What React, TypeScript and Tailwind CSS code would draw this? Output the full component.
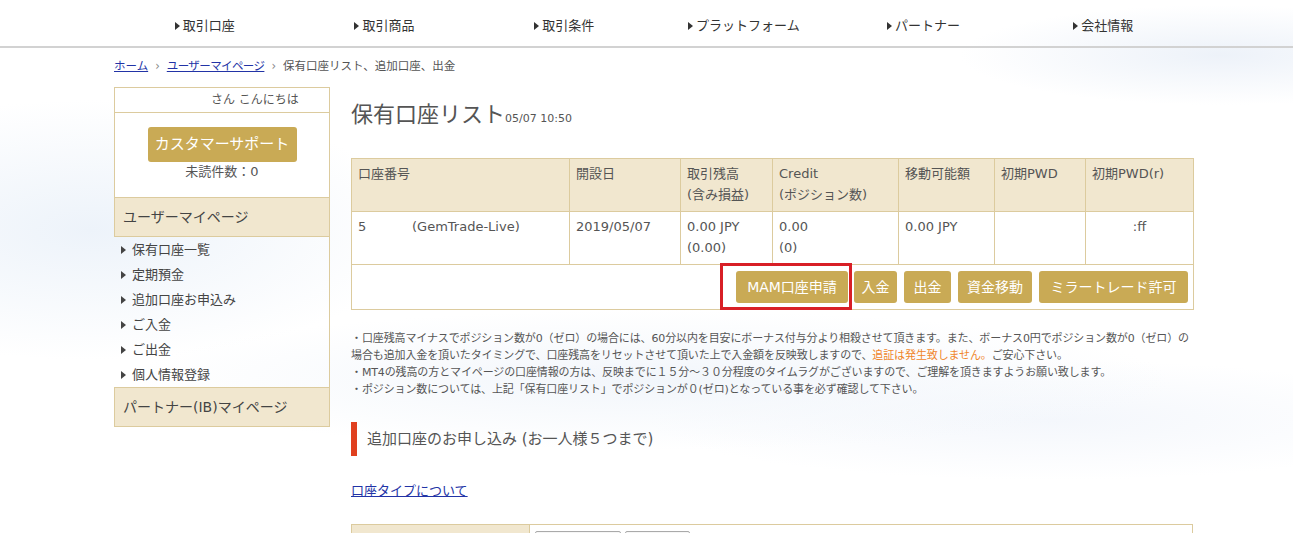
import React from "react";

const Tri = ({ c = "#333" }: { c?: string }) => (
  <svg width="5" height="8" viewBox="0 0 5 8" className="shrink-0">
    <path d="M0 0 L5 4 L0 8 Z" fill={c} />
  </svg>
);

const navItems = ["取引口座", "取引商品", "取引条件", "プラットフォーム", "パートナー", "会社情報"];
const sideItems = ["保有口座一覧", "定期預金", "追加口座お申込み", "ご入金", "ご出金", "個人情報登録"];

export default function App() {
  return (
    <div className="relative h-[533px] w-[1293px] overflow-hidden bg-white font-['DejaVu_Sans','Noto_Sans_CJK_JP',sans-serif] text-[#555]">
      <div className="pointer-events-none absolute inset-0 bg-[radial-gradient(ellipse_330px_130px_at_90px_230px,#edf3fa,transparent),radial-gradient(ellipse_520px_70px_at_650px_380px,#f2f6fb,transparent),radial-gradient(ellipse_260px_50px_at_1220px_55px,#edf2f9,transparent),radial-gradient(ellipse_400px_60px_at_1050px_420px,#f4f7fc,transparent)]" />
      <div className="relative">
        {/* header */}
        <header className="h-[48px] border-b-2 border-[#d2d2d2]">
          <nav className="ml-[115px] grid h-full w-[1078px] grid-cols-6 items-center pt-[6px]">
            {navItems.map((n) => (
              <div key={n} className="flex items-center justify-center gap-[3px] text-[13px] leading-[18px] text-[#333]">
                <Tri />
                <span>{n}</span>
              </div>
            ))}
          </nav>
        </header>

        {/* breadcrumb */}
        <div className="ml-[114px] mt-[10px] flex items-center text-[11.5px] leading-[16px] text-[#555]">
          <a className="text-[#2233a6] underline">ホーム</a>
          <span className="mx-[7px] text-[#888]">›</span>
          <a className="tracking-[-0.6px] text-[#2233a6] underline">ユーザーマイページ</a>
          <span className="mx-[7px] text-[#888]">›</span>
          <span>保有口座リスト、追加口座、出金</span>
        </div>

        <div className="ml-[114px] mt-[13px] flex gap-[21px]">
          {/* sidebar */}
          <aside className="flex w-[216px] flex-col">
            <div className="border-x border-t border-[#dccb9e] bg-white">
              <div className="h-[25px] border-b border-[#dccb9e] pl-[96px] text-[12px] leading-[24px] text-[#555]">
                さん こんにちは
              </div>
              <div className="flex h-[84px] flex-col items-center pt-[14px]">
                <button className="h-[35px] w-[149px] rounded-[3px] bg-[#c9aa55] text-[15px] text-white">
                  カスタマーサポート
                </button>
                <div className="mt-[1px] text-[13px] leading-[18px] text-[#555]">未読件数：0</div>
              </div>
            </div>
            <div className="flex h-[40px] items-center border border-[#dccb9e] bg-[#f1e7cf] pl-[8px] text-[14px] text-[#444]">
              ユーザーマイページ
            </div>
            <ul className="border-r border-[#dccb9e]">
              {sideItems.map((s) => (
                <li key={s} className="flex h-[25px] items-center gap-[6px] pl-[7px] text-[13px] text-[#444]">
                  <Tri c="#444" />
                  <span>{s}</span>
                </li>
              ))}
            </ul>
            <div className="flex h-[40px] items-center border border-[#dccb9e] bg-[#f1e7cf] pl-[8px] text-[14px] text-[#444]">
              パートナー(IB)マイページ
            </div>
          </aside>

          {/* main */}
          <main className="w-[842px] pt-[13px]">
            <div className="flex items-baseline">
              <h1 className="text-[22px] font-normal leading-[30px] text-[#555]">保有口座リスト</h1>
              <span className="text-[11px] text-[#555]">05/07 10:50</span>
            </div>

            <table className="mt-[28px] w-[842px] table-fixed border-collapse text-[13px] leading-[21px] text-[#555]">
              <colgroup>
                <col className="w-[218px]" />
                <col className="w-[111px]" />
                <col className="w-[92px]" />
                <col className="w-[126px]" />
                <col className="w-[96px]" />
                <col className="w-[91px]" />
                <col className="w-[108px]" />
              </colgroup>
              <thead>
                <tr>
                  {["口座番号", "開設日", "取引残高\n(含み損益)", "Credit\n(ポジション数)", "移動可能額", "初期PWD", "初期PWD(r)"].map((h) => (
                    <th
                      key={h}
                      className="h-[53px] whitespace-pre-line border border-[#dccb9e] bg-[#f1e7cf] px-[6px] pb-[6px] pt-[4px] text-left align-top font-normal"
                    >
                      {h}
                    </th>
                  ))}
                </tr>
              </thead>
              <tbody>
                <tr className="bg-white">
                  <td className="h-[53px] border border-[#dccb9e] px-[6px] pb-[6px] pt-[4px] align-top">
                    <span className="inline-block w-[54px]">5</span>(GemTrade-Live)
                  </td>
                  <td className="border border-[#dccb9e] px-[6px] pb-[6px] pt-[4px] align-top">2019/05/07</td>
                  <td className="border border-[#dccb9e] px-[6px] pb-[6px] pt-[4px] align-top">
                    0.00 JPY
                    <br />
                    (0.00)
                  </td>
                  <td className="border border-[#dccb9e] px-[6px] pb-[6px] pt-[4px] align-top">
                    0.00
                    <br />
                    (0)
                  </td>
                  <td className="border border-[#dccb9e] px-[6px] pb-[6px] pt-[4px] align-top">0.00 JPY</td>
                  <td className="border border-[#dccb9e] px-[6px] pb-[6px] pt-[4px] align-top"></td>
                  <td className="border border-[#dccb9e] px-[6px] pb-[6px] pt-[4px] text-center align-top">:ff</td>
                </tr>
                <tr className="bg-white">
                  <td colSpan={7} className="h-[45px] border border-[#dccb9e] px-[5px] py-[5px]">
                    <div className="flex justify-end gap-[7px] text-[14px] text-white">
                      <div className="relative">
                        <span className="pointer-events-none absolute bottom-[-7px] left-[-16px] right-[-4px] top-[-8px] border-[3px] border-[#d81f26]" />
                        <button className="h-[32px] w-[112px] rounded-[3px] bg-[#c9aa55]">MAM口座申請</button>
                      </div>
                      <button className="-ml-[1px] h-[32px] w-[43px] rounded-[3px] bg-[#c9aa55]">入金</button>
                      <button className="h-[32px] w-[47px] rounded-[3px] bg-[#c9aa55]">出金</button>
                      <button className="h-[32px] w-[74px] rounded-[3px] bg-[#c9aa55]">資金移動</button>
                      <button className="h-[32px] w-[149px] rounded-[3px] bg-[#c9aa55]">ミラートレード許可</button>
                    </div>
                  </td>
                </tr>
              </tbody>
            </table>

            <div className="mt-[20px] text-[11px] leading-[17px] tracking-[-0.12px] text-[#555]">
              <p className="whitespace-nowrap">
                ・口座残高マイナスでポジション数が0（ゼロ）の場合には、60分以内を目安にボーナス付与分より相殺させて頂きます。また、ボーナス0円でポジション数が0（ゼロ）の
              </p>
              <p className="whitespace-nowrap">
                場合も追加入金を頂いたタイミングで、口座残高をリセットさせて頂いた上で入金額を反映致しますので、
                <span className="text-[#f0862a]">追証は発生致しません。</span>ご安心下さい。
              </p>
              <p className="whitespace-nowrap">
                ・MT4の残高の方とマイページの口座情報の方は、反映までに１５分～３０分程度のタイムラグがございますので、ご理解を頂きますようお願い致します。
              </p>
              <p className="whitespace-nowrap">
                ・ポジション数については、上記「保有口座リスト」でポジションが０(ゼロ)となっている事を必ず確認して下さい。
              </p>
            </div>

            <h2 className="mt-[24px] flex h-[34px] items-center border-l-[6px] border-[#e0401f] pl-[10px] text-[15px] font-normal text-[#555]">
              追加口座のお申し込み (お一人様５つまで)
            </h2>

            <div className="mt-[26px] text-[13px] leading-[17px]">
              <a className="text-[#2233a6] underline">口座タイプについて</a>
            </div>

            <div className="mt-[25px] flex h-[40px] border border-[#dccb9e] bg-white">
              <div className="w-[178px] border-r border-[#dccb9e] bg-[#f1e7cf]" />
              <div className="flex gap-[4px] pl-[5px] pt-[6px]">
                <div className="h-[26px] w-[86px] rounded-[2px] border border-[#aaa] bg-[#f6f6f6]" />
                <div className="h-[26px] w-[65px] rounded-[2px] border border-[#aaa] bg-[#f6f6f6]" />
              </div>
            </div>
          </main>
        </div>
      </div>
    </div>
  );
}
